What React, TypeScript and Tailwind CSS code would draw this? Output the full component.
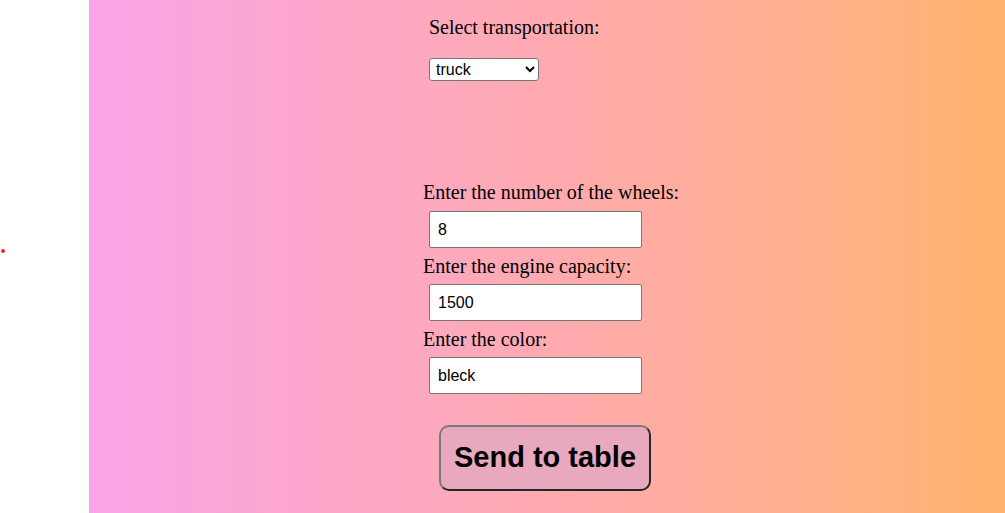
import React from "react";

const serif = { fontFamily: '"Liberation Serif", "Times New Roman", serif' };

export default function App() {
  return (
    <div className="flex h-[513px] w-full overflow-hidden bg-white">
      <div className="w-[89px] shrink-0 pt-[249px] pl-[1px]">
        <div className="h-[4px] w-[4px] rounded-full bg-[#ee2222]" />
      </div>
      <div
        className="flex flex-1 flex-col bg-gradient-to-r from-[#fca4e8] via-[#ffaab0] to-[#ffb36c] pl-[334px] text-black"
        style={serif}
      >
        <div className="ml-[6px] mt-[9px] flex h-[37px] items-center text-[20px] leading-[23px]">
          Select transportation:
        </div>
        <select
          defaultValue="truck"
          className="ml-[6px] mt-[12px] h-[23px] w-[110px] rounded-[3px] border border-[#767676] bg-white pl-[2px] text-[16px] text-black"
          style={{ fontFamily: '"Liberation Sans", Arial, sans-serif' }}
        >
          <option value="car">car</option>
          <option value="truck">truck</option>
          <option value="motorcycle">motorcycle</option>
        </select>
        <div className="mt-[93px] flex h-[37px] items-center text-[20px] leading-[23px]">
          Enter the number of the wheels:
        </div>
        <Field value="8" />
        <div className="flex h-[36px] items-center text-[20px] leading-[23px]">
          Enter the engine capacity:
        </div>
        <Field value="1500" />
        <div className="flex h-[36px] items-center text-[20px] leading-[23px]">
          Enter the color:
        </div>
        <Field value="bleck" />
        <button
          className="ml-[16px] mt-[31px] h-[66px] w-[212px] rounded-[10px] border-2 border-t-[#7a7a7a] border-l-[#7a7a7a] border-r-[#262626] border-b-[#262626] bg-[#e8a8bd] text-[29px] font-bold text-black"
          style={{ fontFamily: '"Liberation Sans", Arial, sans-serif' }}
        >
          Send to table
        </button>
      </div>
    </div>
  );
}

function Field({ value }: { value: string }) {
  return (
    <input
      defaultValue={value}
      className="ml-[6px] h-[37px] w-[213px] rounded-[2px] border border-[#767676] bg-white pl-[8px] text-[16px] text-black outline-none"
      style={{ fontFamily: '"Liberation Sans", Arial, sans-serif' }}
    />
  );
}
